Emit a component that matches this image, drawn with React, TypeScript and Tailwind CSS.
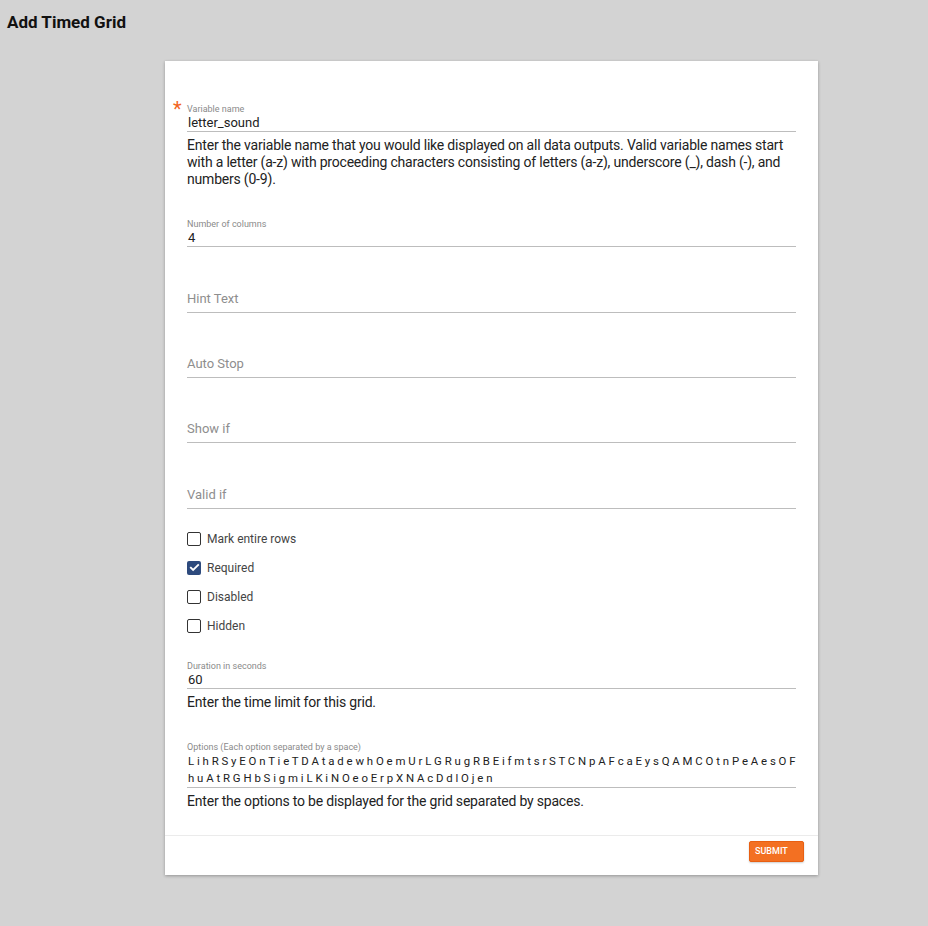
import React from 'react';

const OPTIONS_LINE_1 = 'L i h R S y E O n T i e T D A t a d e w h O e m U r L G R u g R B E i f m t s r S T C N p A F c a E y s Q A M C O t n P e A e s O F';
const OPTIONS_LINE_2 = 'h u A t R G H b S i g m i L K i N O e o E r p X N A c D d l O j e n';

interface FilledFieldProps {
  label: string;
  value: string;
  required?: boolean;
}

const FilledField: React.FC<FilledFieldProps> = ({ label, value, required }) => (
  <div className="relative border-b border-[#bdbdbd]">
    {required && (
      <span className="absolute left-[-14px] top-[-4px] text-[20px] leading-[20px] text-[#f26522]">*</span>
    )}
    <div className="text-[9px] leading-[12px] text-[#8a8a8a]">{label}</div>
    <div className="h-[16px] text-[13px] leading-[16px] text-[#212121] pl-[1px]">{value}</div>
  </div>
);

const EmptyField: React.FC<{ placeholder: string }> = ({ placeholder }) => (
  <div className="h-[29px] border-b border-[#bdbdbd] pt-[7px]">
    <div className="text-[13px] leading-[16px] text-[#8e8e8e]">{placeholder}</div>
  </div>
);

const Helper: React.FC<{ children: React.ReactNode }> = ({ children }) => (
  <p className="mt-[5px] text-[14px] leading-[17px] tracking-[-0.2px] text-[#222222]">{children}</p>
);

const Checkbox: React.FC<{ label: string; checked?: boolean }> = ({ label, checked }) => (
  <div className="flex h-[29px] items-center gap-[6px]">
    {checked ? (
      <span className="flex h-[14px] w-[14px] items-center justify-center rounded-[2px] bg-[#2d4a7d]">
        <svg width="11" height="11" viewBox="0 0 24 24" fill="none" stroke="white" strokeWidth="4" strokeLinecap="square">
          <path d="M4 12.5l5 5L20 6.5" />
        </svg>
      </span>
    ) : (
      <span className="h-[14px] w-[14px] rounded-[2px] border-[1.5px] border-[#333333] bg-white" />
    )}
    <span className="text-[12px] leading-[16px] text-[#444444]">{label}</span>
  </div>
);

const App: React.FC = () => {
  return (
    <div className="min-h-[926px] bg-[#d3d3d3] font-['Roboto',sans-serif]">
      {/* Header */}
      <div className="h-[61px] px-[7px] pt-[12px]">
        <h1 className="text-[17px] font-bold leading-[21px] text-[#111111]">Add Timed Grid</h1>
      </div>

      {/* Card */}
      <div className="ml-[165px] w-[653px] bg-white shadow-[0_1px_3px_rgba(0,0,0,0.3)]">
        <div className="px-[22px] pt-[42px] pb-[25px]">
          <FilledField label="Variable name" value="letter_sound" required />
          <Helper>
            Enter the variable name that you would like displayed on all data outputs. Valid variable names start
            with a letter (a-z) with proceeding characters consisting of letters (a-z), underscore (_), dash (-), and
            numbers (0-9).
          </Helper>

          <div className="mt-[30px]">
            <FilledField label="Number of columns" value="4" />
          </div>

          <div className="mt-[37px]">
            <EmptyField placeholder="Hint Text" />
          </div>
          <div className="mt-[36px]">
            <EmptyField placeholder="Auto Stop" />
          </div>
          <div className="mt-[36px]">
            <EmptyField placeholder="Show if" />
          </div>
          <div className="mt-[37px]">
            <EmptyField placeholder="Valid if" />
          </div>

          <div className="mt-[15px]">
            <Checkbox label="Mark entire rows" />
            <Checkbox label="Required" checked />
            <Checkbox label="Disabled" />
            <Checkbox label="Hidden" />
          </div>

          <div className="mt-[20px]">
            <FilledField label="Duration in seconds" value="60" />
          </div>
          <Helper>Enter the time limit for this grid.</Helper>

          <div className="mt-[30px] border-b border-[#bdbdbd]">
            <div className="text-[9px] leading-[12px] text-[#8a8a8a]">Options (Each option separated by a space)</div>
            <div className="pl-[1px] text-[11.4px] leading-[17px] text-[#212121]">
              <div className="whitespace-nowrap">{OPTIONS_LINE_1}</div>
              <div className="whitespace-nowrap">{OPTIONS_LINE_2}</div>
            </div>
          </div>
          <Helper>Enter the options to be displayed for the grid separated by spaces.</Helper>
        </div>

        {/* Footer */}
        <div className="flex justify-end border-t border-[#ebebeb] pt-[5px] pr-[14px] pb-[13px]">
          <button
            type="button"
            className="h-[21px] w-[55px] rounded-[2px] border border-[#e85f12] bg-[#f37022] pl-[5px] text-left text-[9px] font-medium text-white shadow-[0_1px_2px_rgba(0,0,0,0.2)]"
          >
            SUBMIT
          </button>
        </div>
      </div>
    </div>
  );
};

export default App;
